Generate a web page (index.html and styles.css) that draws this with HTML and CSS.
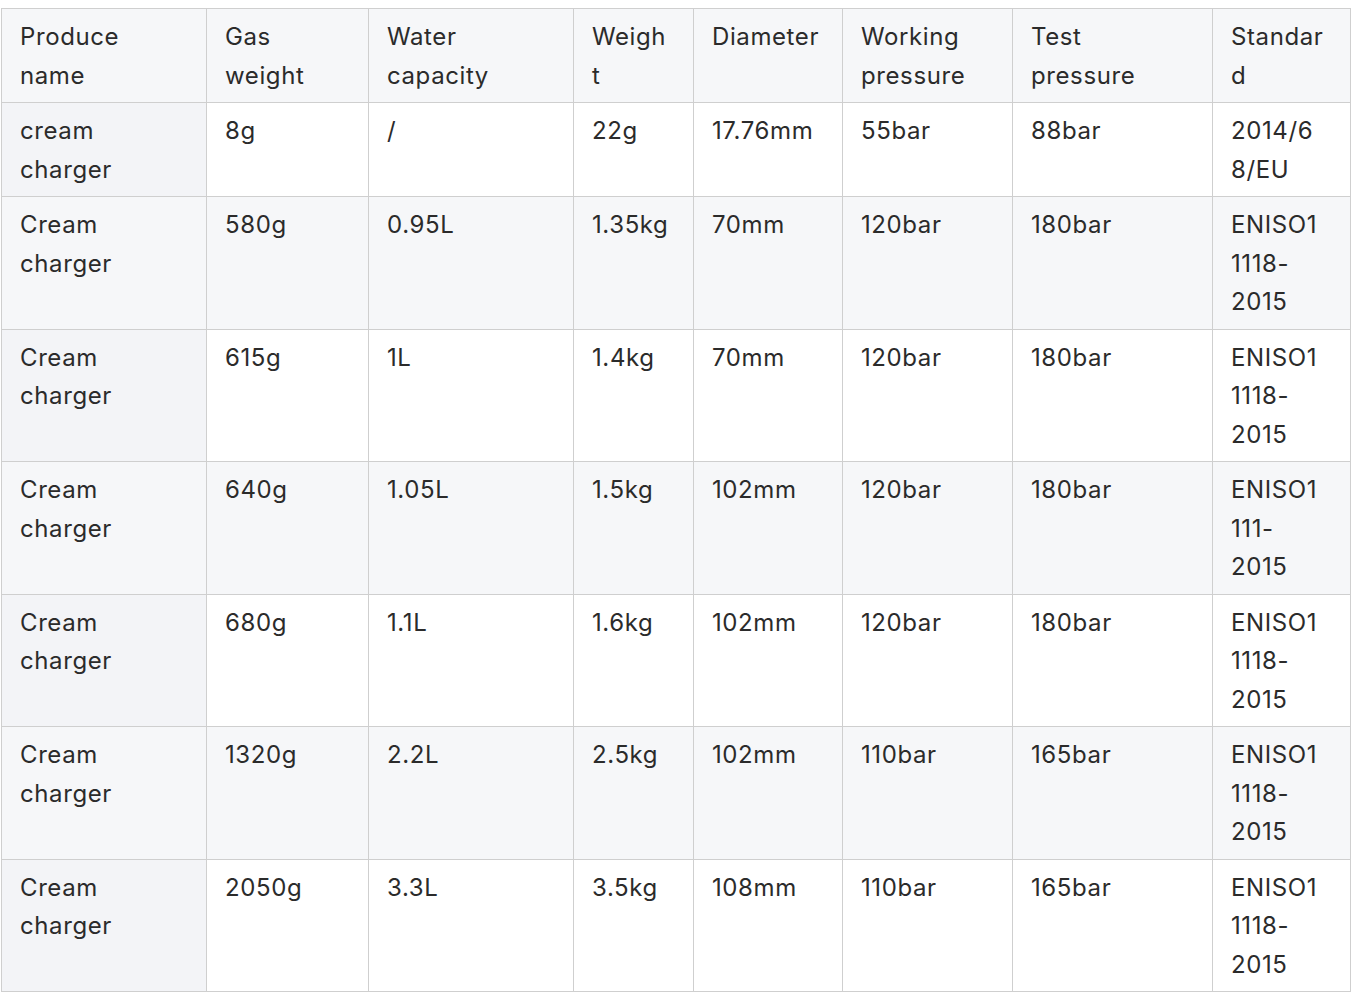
FILE: index.html
```html
<!DOCTYPE html>
<html>
<head>
<meta charset="utf-8">
<link rel="stylesheet" href="styles.css">
</head>
<body>
<table class="spec">
  <colgroup>
    <col class="c1"><col class="c2"><col class="c3"><col class="c4"><col class="c5"><col class="c6"><col class="c7"><col class="c8">
  </colgroup>
  <thead>
    <tr><th>Produce name</th><th>Gas weight</th><th>Water capacity</th><th>Weight</th><th>Diameter</th><th>Working pressure</th><th>Test pressure</th><th>Standard</th></tr>
  </thead>
  <tbody>
    <tr><td>cream charger</td><td>8g</td><td>/</td><td>22g</td><td>17.76mm</td><td>55bar</td><td>88bar</td><td>2014/68/EU</td></tr>
    <tr class="alt"><td>Cream charger</td><td>580g</td><td>0.95L</td><td>1.35kg</td><td>70mm</td><td>120bar</td><td>180bar</td><td>ENISO11118-2015</td></tr>
    <tr><td>Cream charger</td><td>615g</td><td>1L</td><td>1.4kg</td><td>70mm</td><td>120bar</td><td>180bar</td><td>ENISO11118-2015</td></tr>
    <tr class="alt"><td>Cream charger</td><td>640g</td><td>1.05L</td><td>1.5kg</td><td>102mm</td><td>120bar</td><td>180bar</td><td>ENISO1111-2015</td></tr>
    <tr><td>Cream charger</td><td>680g</td><td>1.1L</td><td>1.6kg</td><td>102mm</td><td>120bar</td><td>180bar</td><td>ENISO11118-2015</td></tr>
    <tr class="alt"><td>Cream charger</td><td>1320g</td><td>2.2L</td><td>2.5kg</td><td>102mm</td><td>110bar</td><td>165bar</td><td>ENISO11118-2015</td></tr>
    <tr><td>Cream charger</td><td>2050g</td><td>3.3L</td><td>3.5kg</td><td>108mm</td><td>110bar</td><td>165bar</td><td>ENISO11118-2015</td></tr>
  </tbody>
</table>
</body>
</html>
```
FILE: styles.css
```css
html, body {
  margin: 0;
  padding: 0;
  background: #ffffff;
}
body {
  padding: 8px 0 0 1px;
  font-family: Inter, "Noto Sans", sans-serif;
  color: #2b2b2b;
}
.spec {
  border-collapse: collapse;
  table-layout: fixed;
  width: 1350px;
  font-size: 24px;
  line-height: 38.5px;
  letter-spacing: 0.6px;
}
.c1 { width: 205px; }
.c2 { width: 162px; }
.c3 { width: 205px; }
.c4 { width: 120px; }
.c5 { width: 149px; }
.c6 { width: 170px; }
.c7 { width: 200px; }
.c8 { width: 138px; }
.spec th,
.spec td {
  border: 1px solid #cfcfcf;
  padding: 9px 21px 7px 18px;
  text-align: left;
  vertical-align: top;
  font-weight: 400;
  word-break: normal;
  overflow-wrap: break-word;
}
.spec th:last-child,
.spec td:last-child {
  padding-right: 26px;
}
.spec thead th {
  background: #f6f7f9;
}
.spec tbody tr.alt td {
  background: #f6f7f9;
}
.spec tbody td:first-child {
  background: #f3f4f7;
}
```
